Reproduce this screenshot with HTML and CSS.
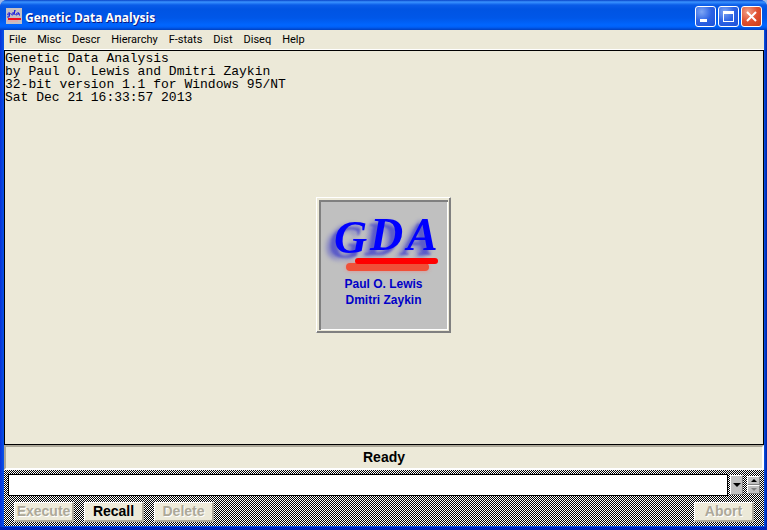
FILE: index.html
```html
<!DOCTYPE html>
<html lang="en">
<head>
    <meta charset="UTF-8">
    <meta name="viewport" content="width=device-width, initial-scale=1.0">
    <title>Genetic Data Analysis</title>
    <link rel="stylesheet" href="styles.css">
</head>
<body>
    <div class="window">
        <header class="titlebar">
            <svg class="app-icon" width="16" height="16" viewBox="0 0 16 16" aria-hidden="true">
                <rect width="16" height="16" fill="#c4c0c4"/>
                <path d="M4 5C2 4 1 7 2 7s2-1 2-2L3 9 1 9M8 5C6 4 5 7 6 7s2-1 3-5L8 7M13 5c-2-1-4 2-3 2s2-1 3-2v2h1" fill="none" stroke="#1414e0"/>
                <path d="M2 11h13" stroke="#f01020" stroke-width="2"/>
                <path d="M1 13h11" stroke="#f0a0a0"/>
            </svg>
            <h1 class="title">Genetic Data Analysis</h1>
            <div class="window-buttons">
                <button class="win-btn" aria-label="Minimize">
                    <svg width="19" height="19" viewBox="0 0 19 19"><path d="M4 12h7v3H4z" fill="#fff"/></svg>
                </button>
                <button class="win-btn" aria-label="Maximize">
                    <svg width="19" height="19" viewBox="0 0 19 19"><path d="M4 4h11v11H4zM5 7v7h9V7z" fill="#fff" fill-rule="evenodd"/></svg>
                </button>
                <button class="win-btn close" aria-label="Close">
                    <svg width="19" height="19" viewBox="0 0 19 19"><path d="M5 5l9 9M14 5l-9 9" stroke="#fff" stroke-width="2"/></svg>
                </button>
            </div>
        </header>

        <nav class="menu">
            <a href="#">File</a>
            <a href="#">Misc</a>
            <a href="#">Descr</a>
            <a href="#">Hierarchy</a>
            <a href="#">F-stats</a>
            <a href="#">Dist</a>
            <a href="#">Diseq</a>
            <a href="#">Help</a>
        </nav>

        <main class="console">
<pre class="log">Genetic Data Analysis
by Paul O. Lewis and Dmitri Zaykin
32-bit version 1.1 for Windows 95/NT
Sat Dec 21 16:33:57 2013</pre>
        </main>

        <div class="status">Ready</div>

        <form class="command">
            <div class="command-row">
                <input class="command-input" type="text" aria-label="Command">
                <button class="drop" type="button" aria-label="Command history">
                    <svg width="8" height="4" viewBox="0 0 8 4"><path d="M0 0h8L4 4z"/></svg>
                </button>
                <div class="spinner">
                    <button class="spin" type="button" aria-label="Previous">
                        <svg width="6" height="3" viewBox="0 0 6 3"><path d="M0 3h6L3 0z"/></svg>
                    </button>
                    <button class="spin" type="button" aria-label="Next" disabled>
                        <svg width="6" height="3" viewBox="0 0 6 3"><path d="M0 0h6L3 3z" fill="#808080"/></svg>
                    </button>
                </div>
            </div>
            <div class="button-row">
                <button class="btn" type="button" disabled>Execute</button>
                <button class="btn" type="button">Recall</button>
                <button class="btn" type="button" disabled>Delete</button>
                <button class="btn abort" type="button" disabled>Abort</button>
            </div>
        </form>

        <div class="splash">
            <svg class="logo" width="129" height="76" viewBox="0 0 129 76">
                <path class="bar bar-shadow" d="M31 67h75"/>
                <g class="logo-text">
                    <text x="15" y="53">G</text>
                    <text x="51" y="50">D</text>
                    <text x="88" y="50">A</text>
                </g>
                <path class="bar" d="M39 61h77"/>
            </svg>
            <p class="authors">Paul O. Lewis<br>Dmitri Zaykin</p>
        </div>
    </div>
</body>
</html>
```
FILE: styles.css
```css
* {
    box-sizing: border-box;
}
body {
    margin: 0;
    background-color: #9db8e8;
    color: #000;
    font-family: "Liberation Sans", Arial, sans-serif;
}
button {
    margin: 0;
    padding: 0;
    font: inherit;
}

/* window frame */
.window {
    position: relative;
    display: flex;
    flex-direction: column;
    min-height: 100vh;
    padding: 0 3px 4px 4px;
    background: linear-gradient(to right, #0831d9, #0855e8 4px, #0855e8 calc(100% - 3px), #001ea0);
    border-radius: 7px 7px 0 0;
    box-shadow: inset 0 -3px 0 #0024b8;
    overflow: hidden;
}
.titlebar {
    display: flex;
    align-items: center;
    height: 30px;
    margin: 0 -3px 0 -4px;
    padding: 2px 5px 0 6px;
    background: linear-gradient(#0842c8, #3a93ff 2px, #0a5ce8 5px, #0054e3 9px, #0057e8 18px, #0066ff 25px, #0060f8 27px, #0040c0);
}
.app-icon {
    margin-right: 3px;
}
.title {
    flex: 1;
    margin: 0;
    padding-top: 3px;
    color: #fff;
    font: bold 12px/18px "Open Sans", "Noto Sans", sans-serif;
    text-shadow: 1px 1px #0a1883;
}
.window-buttons {
    display: flex;
    gap: 2px;
}
.win-btn {
    width: 21px;
    height: 21px;
    border: 1px solid #fff;
    border-radius: 3px;
    background: radial-gradient(circle at 30% 25%, #7ea6f4, #2c62e4 50%, #1c50d8);
}
.win-btn.close {
    background: radial-gradient(circle at 30% 25%, #f0a088, #e05030 50%, #c83c18);
}
.win-btn svg {
    display: block;
}

/* menu */
.menu {
    display: flex;
    align-items: center;
    gap: 11px;
    height: 20px;
    padding-left: 5px;
    background-color: #ece9d8;
    border-bottom: 1px solid #fff;
    font: 11px/18px Roboto, Tahoma, sans-serif;
}
.menu a {
    color: #000;
    text-decoration: none;
}

/* output area */
.console {
    flex: 1;
    border: 1px solid #000;
    background-color: #ece9d8;
}
.log {
    margin: 1px 0 0;
    font: 13px/13px "Liberation Mono", "Courier New", monospace;
}
.status {
    height: 25px;
    background-color: #ece9d8;
    border: 2px solid #fff;
    border-top-color: #aca899;
    border-left-color: #aca899;
    font-size: 14px;
    font-weight: bold;
    line-height: 21px;
    text-align: center;
}

/* command line */
.command {
    padding: 4px;
    background: repeating-conic-gradient(#000 0 25%, #fff 0 50%) 0 0 / 2px 2px;
}
.command-row {
    display: flex;
    align-items: center;
    gap: 2px;
}
.command-input {
    flex: 1;
    min-width: 0;
    height: 22px;
    padding: 0 3px;
    border: 1px solid #000;
    border-radius: 0;
    background-color: #fff;
    font-size: 14px;
}
.drop,
.spin {
    display: flex;
    align-items: center;
    justify-content: center;
    width: 13px;
    border: 1px solid #fff;
    border-right-color: #808080;
    border-bottom-color: #808080;
    background-color: #c0c0c0;
}
.drop {
    height: 20px;
}
.spinner {
    margin-left: 2px;
}
.spin {
    height: 9px;
}
.button-row {
    display: flex;
    gap: 10px;
    padding: 6px 6px 0;
}
.btn {
    width: 60px;
    height: 20px;
    border: 1px solid #fff;
    border-right: 2px solid #aca899;
    border-bottom: 2px solid #aca899;
    background-color: #ece9d8;
    color: #000;
    font-size: 14px;
    font-weight: bold;
    line-height: 17px;
}
.btn:disabled {
    color: #aca899;
    text-shadow: 1px 1px #fff;
}
.abort {
    margin-left: auto;
}

/* logo panel */
.splash {
    position: absolute;
    inset: 0;
    width: 135px;
    height: 136px;
    margin: auto;
    padding: 2px;
    border: 1px solid #fff;
    border-right-color: #808080;
    border-bottom-color: #808080;
    background-color: #c0c0c0;
    box-shadow: inset -1px -1px #808080, inset 0 0 0 2px #ece9d8, inset 4px 4px #808080, inset -3px -3px #fff;
}
.logo {
    display: block;
}
.logo-text {
    fill: #0000ff;
    filter: drop-shadow(-5px 5px 1px #5c5cc8) drop-shadow(-4px 2px 2px #8080c4);
}
.logo-text text {
    font: italic bold 46px "Brush Script MT", "Liberation Serif", serif;
}
.bar {
    stroke: #ff0000;
    stroke-width: 6px;
    stroke-linecap: round;
}
.bar-shadow {
    stroke: #f05038;
    stroke-width: 8px;
    filter: drop-shadow(0 0 2px #e09090);
}
.authors {
    margin: 0;
    color: #0000c8;
    font-size: 12px;
    font-weight: bold;
    line-height: 16px;
    text-align: center;
}
```
